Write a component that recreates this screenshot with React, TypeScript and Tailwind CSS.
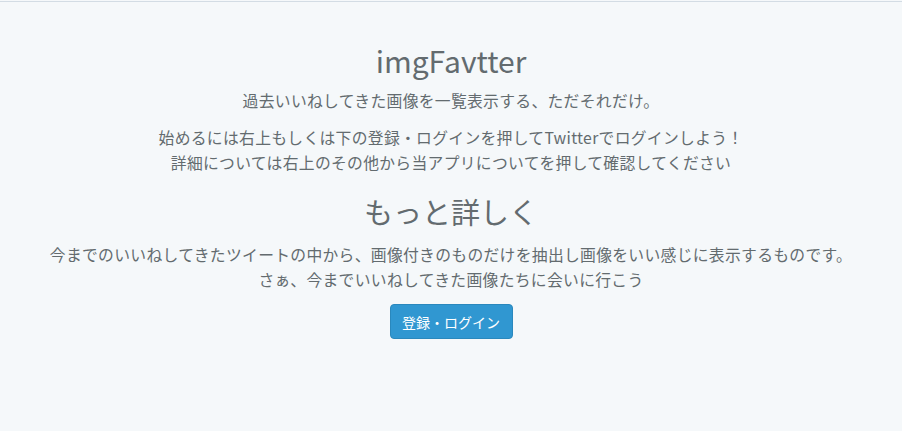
export default function App() {
  return (
    <div
      className="min-h-[431px] bg-[#f5f8fa] text-[#636b6f]"
      style={{ fontFamily: '"Noto Sans CJK JP", "Noto Sans", sans-serif' }}
    >
      {/* top rule */}
      <div className="h-px bg-[#f5f8fa]" />
      <div className="h-px bg-[#d3dce4]" />

      <div className="flex flex-col items-center text-center pt-[40px]">
        <h1 className="text-[30px] leading-[36px] font-normal">imgFavtter</h1>
        <p className="mt-[10px] text-[15.8px] leading-[25px] tracking-[0.3px]">
          過去いいねしてきた画像を一覧表示する、ただそれだけ。
        </p>
        <p className="mt-[12px] text-[15.8px] leading-[25px] tracking-[0.3px]">
          始めるには右上もしくは下の登録・ログインを押してTwitterでログインしよう！
          <br />
          詳細については右上のその他から当アプリについてを押して確認してください
        </p>

        <h2 className="mt-[18px] text-[29px] leading-[36px] font-normal">
          もっと詳しく
        </h2>
        <p className="mt-[13px] text-[15.8px] leading-[25px] tracking-[0.3px]">
          今までのいいねしてきたツイートの中から、画像付きのものだけを抽出し画像をいい感じに表示するものです。
          <br />
          さぁ、今までいいねしてきた画像たちに会いに行こう
        </p>

        <button className="mt-[12px] h-[35px] w-[123px] rounded-[4px] bg-[#3097d1] border border-[#2a88bd] text-white text-[14px] leading-none">
          登録・ログイン
        </button>
      </div>
    </div>
  );
}
